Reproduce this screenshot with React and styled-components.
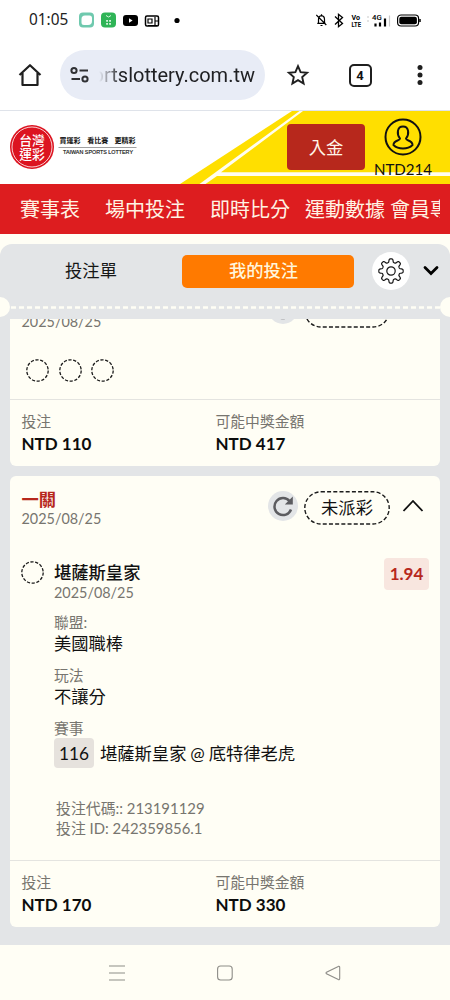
import React from 'react'
import styled, { createGlobalStyle } from 'styled-components'

const bets = [
	{ id: 1, stake: 'NTD 110', payout: 'NTD 417', legs: 3 },
	{ id: 2, stake: 'NTD 170', payout: 'NTD 330', legs: 1 },
]

const details = [
	{ label: '聯盟:', value: '美國職棒' },
	{ label: '玩法', value: '不讓分' },
]

// outline of the settings gear: eight rounded teeth around the centre
const gearPath = () => {
	const points = []
	for (let i = 0; i <= 160; i++) {
		const a = (i / 160) * Math.PI * 2
		const wave = Math.cos(a * 8)
		const r = 10.5 + 1.7 * Math.tanh(wave * 2.2)
		points.push(`${(14 + r * Math.sin(a)).toFixed(2)} ${(14 - r * Math.cos(a)).toFixed(2)}`)
	}
	return `M${points.join('L')}z`
}

const StatusBar = () => (
	<Status>
		<Clock>01:05</Clock>
		<svg width="104" height="18" viewBox="0 0 104 18">
			<rect x="1" y="1.5" width="15" height="15" rx="4" fill="#6fc9ae" />
			<path
				d="M7 4.500h4.500a2.500 2.500 0 0 1 2.500 2.500v3a4 4 0 0 1-4 4H6a2.500 2.500 0 0 1-2.500-2.500V8a3.500 3.500 0 0 1 3.500-3.500z"
				fill="#fff"
			/>
			<rect x="23" y="1.500" width="15" height="15" rx="4" fill="#2fb457" />
			<path d="M28 4.500q2.500 3 5 0" fill="none" stroke="#d9f5df" strokeWidth="1" />
			<path d="M28.200 9h1.700v1.700h-1.700zM31.200 9h1.700v1.700h-1.700zM28.200 12h1.700v1.700h-1.700zM31.200 12h1.700v1.700h-1.700z" fill="#e6f9ea" />
			<rect x="45" y="4" width="15" height="11" rx="3" fill="#000" />
			<path d="M51 7.200l3.600 2.300-3.600 2.300z" fill="#fff" />
			<rect x="67.500" y="5" width="13" height="10" rx="1.500" fill="none" stroke="#000" strokeWidth="1.500" />
			<path d="M70 8h4v4h-4zM77 6v8M77 10h3.500M70 14.500h9" fill="none" stroke="#000" strokeWidth="1.200" />
			<circle cx="99" cy="9.500" r="2.600" fill="#000" />
		</svg>
		<Spacer />
		<svg width="106" height="18" viewBox="0 0 106 18">
			<g fill="none" stroke="#000" strokeWidth="1.200" transform="translate(-1.500 -.5)">
				<path d="M2.800 12.800h8.400M4 12.500V9q0-3.500 3-3.800 3 .3 3 3.800v3.500M7 5V3.800M6 15h2M1.800 4.500l10 10" />
				<path d="M20.500 6l7.500 7-4 3.200V3.800L28 7l-7.500 7" strokeWidth="1.300" />
			</g>
			<g fontFamily="Roboto, sans-serif" fontWeight="700">
				<text x="35.500" y="9" fontSize="7.600" textLength="8.500" lengthAdjust="spacingAndGlyphs">Vo</text>
				<text x="35.500" y="15.900" fontSize="7.400" textLength="9.500" lengthAdjust="spacingAndGlyphs">LTE</text>
				<text x="56" y="9" fontSize="7.800" fontWeight="500">4G</text>
			</g>
			<path d="M59.500 12.500V15.500M64 11.500V15.500M69 7.500V15.500" stroke="#000" strokeWidth="2.200" />
			<path d="M73.500 4.500V15.500" stroke="#c8c8c8" strokeWidth="1.200" />
			<path d="M52 5v2M52 9v2" stroke="#c8c8c8" strokeWidth="1" />
			<rect x="81.600" y="4" width="21" height="11" rx="3.500" fill="#fff" stroke="#000" strokeWidth="1.200" />
			<rect x="83.300" y="5.700" width="17.600" height="7.600" rx="2" fill="#000" />
			<path d="M104 8v3" stroke="#000" strokeWidth="1.500" />
		</svg>
	</Status>
)

const BrowserBar = () => (
	<Browser>
		<svg width="24" height="24" viewBox="0 0 24 24">
			<path
				d="M1.500 12L12 2.200 22.500 12M4.500 10V22h15V10"
				fill="none"
				stroke="#1f1f1f"
				strokeWidth="2.200"
				strokeLinejoin="round"
			/>
		</svg>
		<UrlPill>
			<svg width="20" height="18" viewBox="0 0 20 18" fill="none" stroke="#303134" strokeWidth="2">
				<circle cx="4" cy="4.500" r="2.600" />
				<path d="M9.500 4.500H18M1.500 13H10" />
				<circle cx="15" cy="13" r="2.600" />
			</svg>
			<UrlText>ortslottery.com.tw</UrlText>
		</UrlPill>
		<svg className="star" width="24" height="24" viewBox="0 0 24 24">
			<path
				d="M12 3.200l2.600 6 6.500.600-4.900 4.300 1.400 6.400L12 17.100l-5.600 3.400 1.400-6.400-4.900-4.300 6.500-.600z"
				fill="none"
				stroke="#1f1f1f"
				strokeWidth="1.900"
			/>
		</svg>
		<TabCount>4</TabCount>
		<svg className="dots" width="8" height="24" viewBox="0 0 8 24" fill="#1f1f1f">
			<circle cx="4" cy="4.500" r="2.500" />
			<circle cx="4" cy="12" r="2.500" />
			<circle cx="4" cy="19.500" r="2.500" />
		</svg>
	</Browser>
)

const Logo = () => (
	<svg width="128" height="44" viewBox="0 0 128 44">
		<circle cx="22" cy="22" r="22" fill="#dc1420" />
		<circle cx="22" cy="22" r="20" fill="none" stroke="#fff" strokeWidth=".8" />
		<g fill="#fff" fontFamily="'Noto Sans CJK TC', sans-serif" fontWeight="500" fontSize="12.800">
			<text x="9.200" y="20.300">台灣</text>
			<text x="9.200" y="33.800">運彩</text>
		</g>
		<g fill="#111" fontFamily="'Noto Sans CJK TC', sans-serif" fontWeight="700" fontSize="7">
			<text x="49.500" y="18.200">買運彩</text>
			<text x="77.300" y="18.200">看比賽</text>
			<text x="104.500" y="18.200">更精彩</text>
		</g>
		<path d="M48.500 22.500h78" stroke="#777" strokeWidth=".7" />
		<text
			x="53"
			y="29.200"
			fill="#111"
			stroke="#111"
			strokeWidth=".15"
			fontFamily="'Liberation Sans', sans-serif"
			fontSize="5.200"
			textLength="70"
			lengthAdjust="spacingAndGlyphs"
		>
			TAIWAN SPORTS LOTTERY
		</text>
	</svg>
)

const SiteHeader = () => (
	<Header>
		<Stripes width="270" height="73" viewBox="0 0 270 73">
			<path d="M112 0H270V73H0z" fill="#ffdf00" />
			<path d="M119.500 0H123L41 61.300H270V65H37L25.500 73H19.500L40 58z" fill="#fffdf0" />
		</Stripes>
		<Logo />
		<Spacer />
		<DepositButton>入金</DepositButton>
		<Account>
			<svg width="40" height="40" viewBox="0 0 40 40" fill="none" stroke="#111" strokeWidth="2">
				<circle cx="20" cy="20" r="17.500" />
				<path d="M17 21.500C13.500 17 14 9.500 20 9.500S26.500 17 23 21.500C23 24 29.500 23 29.500 28 27 30.500 24 31.500 20 31.500S13 30.500 10.500 28C10.500 23 17 24 17 21.500z" />
			</svg>
			<Balance>NTD214</Balance>
		</Account>
	</Header>
)

const Reload = () => (
	<ReloadButton>
		<svg width="22" height="22" viewBox="0 0 22 22">
			<path d="M17.600 6.200A8.500 8.500 0 1 0 19 14.500" fill="none" stroke="#5c5c60" strokeWidth="2.500" />
			<path d="M20.800 1.500V9.500H12.800z" fill="#5c5c60" />
		</svg>
	</ReloadButton>
)

const DashedRing = () => (
	<svg width="23" height="23" viewBox="0 0 23 23">
		<circle cx="11.500" cy="11.500" r="10.700" fill="none" stroke="#1c1c1c" strokeWidth="1.300" strokeDasharray="3.200 1.600" />
	</svg>
)

const StatusPill = () => (
	<Pill>
		<svg width="86" height="34" viewBox="0 0 86 34">
			<rect x=".8" y=".8" width="84.400" height="32.200" rx="16.100" fill="none" stroke="#1c1c1c" strokeWidth="1.400" strokeDasharray="4 2.200" />
		</svg>
		<span>未派彩</span>
	</Pill>
)

const BetCard = ({ bet }) => {
	const single = bet.legs === 1

	return (
		<Card $scrolled={!single}>
			<CardTop>
				<div>
					<BetType>{single ? '一關' : '三關'}</BetType>
					<Muted>2025/08/25</Muted>
				</div>
				<Spacer />
				<Reload />
				<StatusPill />
				<svg className="fold" width="22" height="14" viewBox="0 0 22 14">
					<path d="M1.500 12L11 2l9.500 10" fill="none" stroke="#111" strokeWidth="1.800" />
				</svg>
			</CardTop>
			{single ? (
				<Selection>
					<DashedRing />
					<Info>
						<Team>堪薩斯皇家</Team>
						<Muted>2025/08/25</Muted>
						{details.map(el => (
							<Detail key={el.label}>
								<Label>{el.label}</Label>
								<Value>{el.value}</Value>
							</Detail>
						))}
						<Label>賽事</Label>
						<Match>
							<MatchNo>116</MatchNo>
							<span>堪薩斯皇家 @ 底特律老虎</span>
						</Match>
						<Codes>
							<div>投注代碼:: 213191129</div>
							<div>投注 ID: 242359856.1</div>
						</Codes>
					</Info>
					<Odds>1.94</Odds>
				</Selection>
			) : (
				<Legs>
					{Array.from({ length: bet.legs }, (_, i) => (
						<DashedRing key={i} />
					))}
				</Legs>
			)}
			<CardFooter>
				<div>
					<Label>投注</Label>
					<Amount>{bet.stake}</Amount>
				</div>
				<div>
					<Label>可能中獎金額</Label>
					<Amount>{bet.payout}</Amount>
				</div>
			</CardFooter>
		</Card>
	)
}

const SlipHeader = () => (
	<Slip>
		<Tabs>
			<Tab>投注單</Tab>
			<Tab $active>我的投注</Tab>
			<GearButton>
				<svg width="28" height="28" viewBox="0 0 28 28" fill="none" stroke="#161616" strokeWidth="1.200" strokeLinejoin="round">
					<circle cx="14" cy="14" r="4.200" />
					<path d={gearPath()} />
				</svg>
			</GearButton>
			<svg width="16" height="12" viewBox="0 0 16 12">
				<path d="M2 2.500l6 6 6-6" fill="none" stroke="#000" strokeWidth="2.800" strokeLinecap="round" />
			</svg>
		</Tabs>
		<Perforation>
			<Notch $side="left" />
			<svg width="430" height="3" viewBox="0 0 430 3">
				<path d="M1 1.500H430" stroke="#fffef5" strokeWidth="2.600" strokeDasharray="5 3" />
			</svg>
			<Notch $side="right" />
		</Perforation>
	</Slip>
)

const SystemNav = () => (
	<NavKeys>
		<svg width="16" height="16" viewBox="0 0 16 16">
			<path d="M0 1h16M0 8h16M0 15h16" />
		</svg>
		<svg width="16" height="16" viewBox="0 0 16 16">
			<rect x=".6" y="1" width="14.600" height="14" rx="3" />
		</svg>
		<svg width="16" height="16" viewBox="0 0 16 16">
			<path d="M13.300 1.400L1.500 7.200Q.6 8 1.500 8.800l11.800 5.800q1.400.4 1.400-1V2.400q0-1.400-1.400-1z" />
		</svg>
	</NavKeys>
)

const App = () => (
	<Screen>
		<GlobalStyle />
		<StatusBar />
		<BrowserBar />
		<SiteHeader />
		<MenuBar>
			<MenuItem $gap={25}>賽事表</MenuItem>
			<MenuItem $gap={25}>場中投注</MenuItem>
			<MenuItem $gap={15}>即時比分</MenuItem>
			<MenuItem $gap={5}>運動數據</MenuItem>
			<MenuItem>會員專區</MenuItem>
		</MenuBar>
		<Body>
			<SlipHeader />
			<BetList>
				{bets.map(bet => (
					<BetCard key={bet.id} bet={bet} />
				))}
			</BetList>
		</Body>
		<SystemNav />
	</Screen>
)

const GlobalStyle = createGlobalStyle`
	* {
		box-sizing: border-box;
	}

	body {
		margin: 0;
		background: #fffef5;
	}

	svg {
		display: block;
		flex: none;
	}
`

const Screen = styled.div`
	display: flex;
	flex-direction: column;
	width: 450px;
	height: 1000px;
	overflow: hidden;
	font-family: Lato, 'Noto Sans CJK TC', sans-serif;
	font-size: 17.3px;
	color: #111;
	background: #fffef5;
	white-space: nowrap;
`

const Spacer = styled.div`
	flex: 1;
`

const Status = styled.div`
	display: flex;
	align-items: center;
	height: 40px;
	padding: 0 28px 0 29px;
	background: #fff;
`

const Clock = styled.div`
	width: 49px;
	font: 15.4px/20px 'Noto Sans', sans-serif;
	color: #222;
`

const Browser = styled.div`
	display: flex;
	align-items: center;
	height: 71px;
	padding: 0 26px 0 18px;
	background: #fff;
	border-bottom: 1px solid #dfe3ea;

	.star {
		margin: 0 0 0 21px;
	}

	.dots {
		margin-left: 44px;
	}
`

const UrlPill = styled.div`
	display: flex;
	align-items: center;
	width: 205px;
	height: 50px;
	margin-left: 18px;
	padding-left: 10px;
	border-radius: 25px;
	background: #e8ecf6;
`

const UrlText = styled.div`
	display: flex;
	justify-content: flex-end;
	width: 156px;
	margin-left: 9px;
	overflow: hidden;
	font: 20px/26px Roboto, sans-serif;
	color: #202124;
	mask-image: linear-gradient(to right, transparent, #000 22px);
`

const TabCount = styled.div`
	width: 23px;
	height: 23px;
	margin-left: 38.500px;
	border: 2px solid #1f1f1f;
	border-radius: 5px;
	font: 700 13px/19px Roboto, sans-serif;
	text-align: center;
`

const Header = styled.header`
	position: relative;
	display: flex;
	align-items: center;
	height: 73px;
	padding: 0 18px 2px 10px;
	background: #fff;

	> * {
		position: relative;
	}
`

const Stripes = styled.svg`
	&& {
		position: absolute;
		top: 0;
		right: 0;
	}
`

const DepositButton = styled.button`
	width: 78px;
	height: 46px;
	padding: 0;
	border: 0;
	border-radius: 4px;
	font: inherit;
	color: #fff5e8;
	background: #b7281c;
`

const Account = styled.div`
	display: flex;
	flex-direction: column;
	align-items: center;
	align-self: flex-start;
	width: 58px;
	margin-left: 9px;
	padding-top: 6px;
`

const Balance = styled.div`
	font-size: 15.1px;
	line-height: 18px;
	margin-top: 3px;
`

const MenuBar = styled.nav`
	display: flex;
	align-items: center;
	height: 50px;
	padding-left: 20px;
	border-right: 10px solid #dd1d1f;
	overflow: hidden;
	background: #dd1d1f;
`

const MenuItem = styled.div`
	flex: none;
	margin-right: ${props => props.$gap || 0}px;
	font-size: 20px;
	line-height: 51px;
	color: #fff3e4;
`

const Body = styled.main`
	display: flex;
	flex-direction: column;
	height: 701px;
	margin-top: 10px;
	border-radius: 12px 12px 0 0;
	overflow: hidden;
	background: #e3e5e7;
`

const Slip = styled.div`
	flex: none;
	height: 75px;
	padding-top: 8px;
`

const Tabs = styled.div`
	display: flex;
	align-items: center;
	height: 38px;

	> svg {
		margin-left: 12.500px;
	}
`

const Tab = styled.div`
	width: ${props => (props.$active ? 172 : 182)}px;
	height: 33px;
	padding-right: ${props => (props.$active ? 9 : 0)}px;
	border-radius: 5px;
	line-height: 32px;
	text-align: center;
	font-weight: ${props => (props.$active ? 500 : 400)};
	color: ${props => (props.$active ? '#fff6dc' : '#161616')};
	background: ${props => (props.$active ? '#ff7a00' : 'none')};
`

const GearButton = styled.div`
	display: flex;
	align-items: center;
	justify-content: center;
	width: 38px;
	height: 38px;
	margin-left: 18px;
	border-radius: 50%;
	background: #fff;
`

const Perforation = styled.div`
	position: relative;
	display: flex;
	justify-content: center;
	align-items: center;
	height: 20px;
	margin-top: 7px;
`

const Notch = styled.div`
	position: absolute;
	top: 0;
	${props => props.$side}: -10px;
	width: 20px;
	height: 20px;
	border-radius: 50%;
	background: #fffef5;
`

const BetList = styled.div`
	flex: 1;
	display: flex;
	flex-direction: column;
	gap: 10px;
	padding: 0 10px;
	overflow: hidden;
`

const Card = styled.section`
	flex: none;
	display: flex;
	flex-direction: column;
	height: ${props => (props.$scrolled ? 187 : 451)}px;
	margin-top: ${props => (props.$scrolled ? -40 : 0)}px;
	border-radius: 6px;
	background: #fffef5;
`

const CardTop = styled.div`
	display: flex;
	height: 82px;
	padding: 14px 16px 0 11.500px;

	.fold {
		margin: 9px 0 0 12px;
	}
`

const BetType = styled.div`
	font-weight: 700;
	line-height: 19px;
	color: #b7281c;
`

const Muted = styled.div`
	font-size: 14.4px;
	line-height: 20px;
	color: #77756f;
`

const ReloadButton = styled.div`
	display: flex;
	align-items: center;
	justify-content: center;
	width: 30px;
	height: 30px;
	margin: 1px 6px 0 0;
	border-radius: 50%;
	background: #e3e5e7;
`

const Pill = styled.div`
	display: grid;
	place-items: center;
	height: 34px;
	margin-top: 1px;
	line-height: 22px;

	> * {
		grid-area: 1 / 1;
	}
`

const Legs = styled.div`
	display: flex;
	gap: 9.500px;
	padding: 0 16px;
	margin-top: -2px;
`

const Selection = styled.div`
	display: flex;
	align-items: flex-start;
	padding: 0 11px;

	> svg {
		margin-top: 3px;
	}
`

const Info = styled.div`
	flex: 1;
	padding: 5px 0 0 10px;
`

const Team = styled.div`
	font-weight: 500;
	line-height: 20px;
`

const Label = styled.div`
	font-size: 14.8px;
	line-height: 18px;
	color: #77756f;
`

const Value = styled.div`
	padding-top: 2px;
	line-height: 22px;
`

const Detail = styled.div`
	padding-bottom: 11px;

	${Muted} + & {
		padding-top: 10px;
	}
`

const Match = styled.div`
	display: flex;
	align-items: center;
	height: 30px;
	margin-top: 1px;
	line-height: 28px;
	word-spacing: -.5px;

	span {
		padding-top: 2px;
	}
`

const MatchNo = styled.div`
	width: 40px;
	height: 30px;
	margin-right: 6px;
	border-radius: 4px;
	line-height: 31px;
	text-align: center;
	background: #e6e2dd;
`

const Codes = styled.div`
	padding: 30px 0 0 2px;
	font-size: 14.900px;
	line-height: 20px;
	color: #77756f;
`

const Odds = styled.div`
	width: 45px;
	height: 32px;
	border-radius: 4px;
	font-size: 17px;
	font-weight: 700;
	line-height: 32px;
	text-align: center;
	color: #b7281c;
	background: #f8e6df;
`

const CardFooter = styled.div`
	display: grid;
	grid-template-columns: 194px 1fr;
	height: 67px;
	margin-top: auto;
	padding: 12px 11.500px 0;
	border-top: 1px solid #e4e4e0;
`

const Amount = styled.div`
	padding-top: 2px;
	font-size: 17px;
	font-weight: 700;
	line-height: 24px;
	color: #0c0c0c;
`

const NavKeys = styled.div`
	display: flex;
	justify-content: center;
	align-items: center;
	gap: 92px;
	height: 55px;

	svg {
		fill: none;
		stroke: #8e8d88;
		stroke-width: 1.100;
	}
`

export default App
